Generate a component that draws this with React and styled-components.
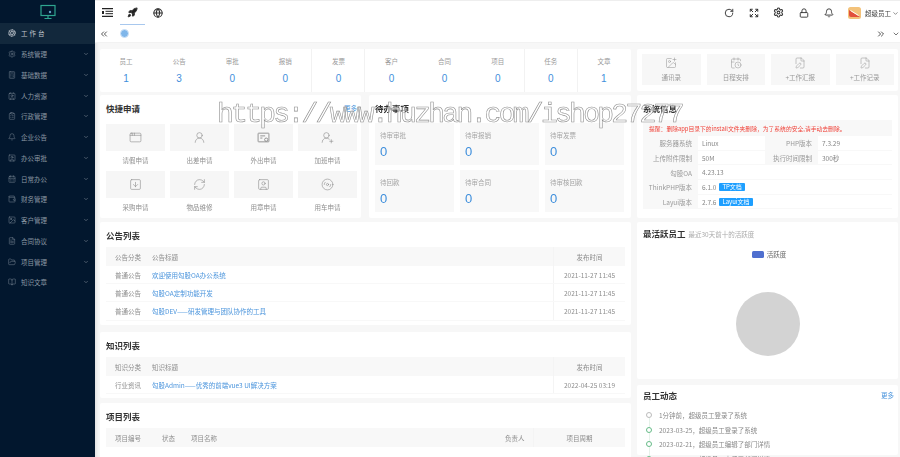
import React from "react";
import styled, { createGlobalStyle } from "styled-components";
import {
  Aperture, Settings, Calculator, Contact, ClipboardList, Bell, UserSquare, CalendarDays, Wallet, Image,
  FileText, FolderOpen, BookOpen, ChevronDown, ChevronsLeft, ChevronsRight, Rocket, Globe,
  RotateCw, Expand, Lock, AppWindow, UserRound, UserRoundPlus, SquareArrowDown, RefreshCw, SquareUser, Disc3,
  ImagePlus, CalendarClock, FileEdit, FilePen,
} from "lucide-react";

const GlobalStyle = createGlobalStyle`
  html, body { margin: 0; padding: 0; height: 100%; overflow: hidden; }
  body { font-family: "Noto Sans CJK SC", "Liberation Sans", sans-serif; background: #f7f7f7; }
  * { box-sizing: border-box; }
`;

const Shell = styled.div`
  position: relative;
  display: flex;
  width: 900px;
  height: 457px;
  overflow: hidden;
  filter: blur(0.4px);
`;

const Sidebar = styled.aside`
  width: 95px;
  flex: none;
  background: #02172e;
  color: #a7b0ba;
`;

const Logo = styled.div`
  height: 23px;
  display: flex;
  align-items: center;
  justify-content: center;
  padding-top: 1px;
`;

const MenuItem = styled.div`
  height: 20.75px;
  display: flex;
  align-items: center;
  padding-left: 8px;
  font-size: 6.5px;
  color: ${(p) => (p.$active ? "#c0c6cd" : "#8c97a3")};
  background: ${(p) => (p.$active ? "#12283c" : "transparent")};
  letter-spacing: ${(p) => (p.$active ? "2px" : "0")};
  span { margin-left: 5px; flex: 1; }
`;

const Main = styled.main`
  flex: 1;
  min-width: 0;
  display: flex;
  flex-direction: column;
  box-shadow: inset 4px 0 4px -3px rgba(0, 0, 0, 0.12);
`;

const TopBar = styled.header`
  height: 25px;
  flex: none;
  display: flex;
  align-items: stretch;
  background: #fff;
  border-top: 1px solid #eee;
`;

const NavIcon = styled.div`
  width: ${(p) => p.$w || 25}px;
  display: flex;
  align-items: center;
  justify-content: center;
  color: #333;
  border-bottom: 1px solid ${(p) => (p.$active ? "#a8c8ee" : "transparent")};
`;

const TopRight = styled.div`
  margin-left: auto;
  display: flex;
  align-items: center;
`;

const UserName = styled.div`
  display: flex;
  align-items: center;
  gap: 1px;
  font-size: 6.5px;
  color: #444;
  margin-left: 4px;
  padding-right: 1px;
`;

const Tabs = styled.div`
  height: 18px;
  flex: none;
  display: flex;
  align-items: center;
  background: #fff;
  color: #333;
  padding: 0 0 0 4px;
  border-bottom: 1px solid #f2f2f2;
`;

const TabMark = styled.div`
  width: 9px;
  height: 9px;
  margin-left: 11px;
  border-radius: 50%;
  background: #7fb6ea;
  border: 1.5px solid #cfe3f7;
`;

const TabEnd = styled.div`
  margin-left: auto;
  display: flex;
  align-items: center;
  gap: 6px;
`;

const Content = styled.div`
  flex: 1;
  display: flex;
  gap: 6px;
  padding: 6px 2px 0 5px;
  overflow: hidden;
`;

const Column = styled.div`
  width: ${(p) => p.$w}px;
  flex: none;
  display: flex;
  flex-direction: column;
`;

const Row = styled.div`
  display: flex;
  gap: 8px;
  margin-bottom: 4px;
`;

const Card = styled.section`
  width: ${(p) => (p.$w ? `${p.$w}px` : "auto")};
  height: ${(p) => p.$h}px;
  flex: none;
  margin-bottom: ${(p) => p.$mb || 0}px;
  padding: ${(p) => p.$pad || "0 6px"};
  background: #fff;
  border-radius: 2px;
`;

const StatsCard = styled(Card)`
  display: flex;
  padding: 0;
`;

const Stat = styled.div`
  width: 53.1px;
  display: flex;
  flex-direction: column;
  align-items: center;
  padding-top: 8px;
  border-right: 1px solid ${(p) => (p.$line ? "#f2f2f2" : "transparent")};
`;

const StatLabel = styled.div`
  font-size: 6.5px;
  line-height: 9px;
  color: #9a9a9a;
`;

const StatValue = styled.div`
  font-family: "Liberation Sans", sans-serif;
  font-size: 10px;
  line-height: 12px;
  margin-top: 7px;
  color: #3f8fdc;
`;

const ActionGrid = styled.div`
  display: flex;
  gap: 6px;
  padding: 5px 4px 0 5px;
`;

const Action = styled.div`
  width: 59px;
  height: 31px;
  background: #f7f7f7;
  display: flex;
  flex-direction: column;
  align-items: center;
  gap: 4px;
  padding-top: 3px;
  color: #999;
  font-size: 6.5px;
  line-height: 9px;
`;

const TitleRow = styled.div`
  height: 25px;
  display: flex;
  align-items: center;
  padding-bottom: ${(p) => p.$pb || 0}px;
  justify-content: space-between;
`;

const Title = styled.h3`
  margin: 0;
  font-size: 8.5px;
  font-weight: 700;
  color: #333;
  small {
    font-size: 6.5px;
    font-weight: 400;
    color: #aaa;
    margin-left: 3px;
  }
`;

const More = styled.a`
  font-size: 6.5px;
  color: #4a94dc;
  margin-right: -2px;
`;

const QuickGrid = styled.div`
  display: grid;
  grid-template-columns: repeat(4, 59px);
  gap: 0 5px;
  margin-top: 4px;
`;

const Quick = styled.div`
  display: flex;
  flex-direction: column;
  align-items: center;
  height: 47px;
  font-size: 6.5px;
  color: #8f8f8f;
`;

const QuickTile = styled.div`
  width: 100%;
  height: 27px;
  background: #f6f6f6;
  display: flex;
  align-items: center;
  justify-content: center;
  color: #8a8a8a;
  margin-bottom: 4px;
`;

const TodoGrid = styled.div`
  display: grid;
  grid-template-columns: repeat(3, 79px);
  gap: 5px 6px;
  margin-top: 3px;
`;

const Todo = styled.div`
  height: 42px;
  background: #f8f8f8;
  padding: 7.5px 5px;
  font-size: 6.5px;
  line-height: 9px;
  color: #a5a5a5;
`;

const TodoValue = styled.div`
  font-family: "Liberation Sans", sans-serif;
  font-size: 13px;
  line-height: 14px;
  margin-top: 5px;
  color: #3f8fdc;
`;

const InfoBox = styled.div`
  background: #f8f8f8;
  font-size: 6.5px;
  color: #888;
`;

const Notice = styled.div`
  height: 16px;
  padding: 4px 6px 0;
  line-height: 10px;
  font-size: 5.8px;
  color: #f0433a;
  white-space: nowrap;
`;

const InfoRow = styled.div`
  display: flex;
  height: 14.7px;
  align-items: center;
`;

const InfoLabel = styled.div`
  width: ${(p) => p.$w}px;
  flex: none;
  text-align: right;
  padding-right: 6px;
  color: #999;
  white-space: nowrap;
`;

const InfoValue = styled.div`
  flex: ${(p) => (p.$w ? "none" : 1)};
  width: ${(p) => (p.$w ? `${p.$w}px` : "auto")};
  height: 100%;
  background: #fff;
  display: flex;
  align-items: center;
  gap: 3px;
  padding-left: 4px;
  color: #888;
  border-bottom: 1px solid #f8f8f8;
`;

const DocTag = styled.span`
  background: #1e9fff;
  color: #fff;
  font-size: 6px;
  line-height: 8px;
  padding: 0 3px;
  border-radius: 1px;
`;

const Table = styled.div`
  font-size: 6.5px;
  color: #8d8d8d;
`;

const HeaderRow = styled.div`
  display: flex;
  height: ${(p) => p.$h || 19}px;
  align-items: center;
  background: #f8f8f8;
`;

const BodyRow = styled.div`
  display: flex;
  height: 18.2px;
  align-items: center;
  border-bottom: 1px solid #f8f8f8;
`;

const Cell = styled.div`
  width: ${(p) => p.$w}px;
  flex: ${(p) => (p.$w ? "none" : 1)};
  padding-left: ${(p) => p.$pl ?? 9}px;
  white-space: nowrap;
  align-self: stretch;
  display: flex;
  align-items: center;
  justify-content: ${(p) => (p.$center ? "center" : "flex-start")};
  color: ${(p) => (p.$link ? "#4a94dc" : "inherit")};
  border-left: ${(p) => (p.$line ? "1px solid #f4f4f4" : "0")};
`;

const Legend = styled.div`
  display: flex;
  justify-content: center;
  align-items: center;
  gap: 3px;
  font-size: 6.5px;
  color: #666;
  margin-top: 2px;
  padding-left: 3px;
  i {
    width: 12px;
    height: 7px;
    border-radius: 1.5px;
    background: #4f6fcf;
  }
`;

const Pie = styled.div`
  width: 64px;
  height: 64px;
  border-radius: 50%;
  background: #d3d3d3;
  margin: 33px auto 0;
`;

const Timeline = styled.div`
  margin-top: -2px;
`;

const Event = styled.div`
  display: flex;
  align-items: center;
  height: 14.6px;
  font-size: 6.5px;
  color: #888;
  white-space: nowrap;
  i {
    position: relative;
    width: 6px;
    height: 6px;
    margin: 0 7px 0 3px;
    border-radius: 50%;
    border: 1px solid ${(p) => (p.$first ? "#bbb" : "#66bb88")};
  }
  i::after {
    content: "";
    position: absolute;
    left: 1.5px;
    top: 5px;
    height: 9px;
    border-left: 1px solid #e6f2ea;
  }
`;

const Watermark = styled.div`
  position: absolute;
  left: 217px;
  top: 98px;
  font-family: "Liberation Mono", monospace;
  font-size: 28px;
  line-height: 34px;
  letter-spacing: -2.72px;
  color: rgba(255, 255, 255, 0.6);
  -webkit-text-stroke: 0.6px #8f8f8f;
  white-space: nowrap;
  pointer-events: none;
`;

const NavMenuIcon = () => (
  <svg width="11" height="9" viewBox="0 0 11 9" fill="none" stroke="#222">
    <path d="M0 .7h11M0 8.300h11" strokeWidth="1.300" />
    <path d="M3.500 3.300h7.500M3.500 5.700h7.500" strokeWidth="1" />
    <path d="M0 3h2v3H0z" fill="#222" strokeWidth="0" />
  </svg>
);

const TicketIcon = ({ size, strokeWidth }) => (
  <svg width={size} height={size} viewBox="0 0 24 24" fill="none" stroke="currentColor" strokeWidth={strokeWidth * 1.5}>
    <rect x="2" y="4" width="20" height="16" rx="1" />
    <path d="M6 9h9M6 13h4" />
    <circle cx="17" cy="16" r="3" />
  </svg>
);

const menu = [
  [Settings, "系统管理"], [Calculator, "基础数据"], [Contact, "人力资源"], [ClipboardList, "行政管理"],
  [Bell, "企业公告"], [UserSquare, "办公审批"], [CalendarDays, "日常办公"], [Wallet, "财务管理"],
  [Image, "客户管理"], [FileText, "合同协议"], [FolderOpen, "项目管理"], [BookOpen, "知识文章"],
];

const stats = [
  ["员工", 1], ["公告", 3], ["审批", 0], ["报销", 0, true], ["发票", 0, true],
  ["客户", 0], ["合同", 0], ["项目", 0, true], ["任务", 0, true], ["文章", 1],
];

const actions = [[ImagePlus, "通讯录"], [CalendarClock, "日程安排"], [FileEdit, "+工作汇报"], [FilePen, "+工作记录"]];

const quick = [
  [AppWindow, "请假申请"], [UserRound, "出差申请"], [TicketIcon, "外出申请"], [UserRoundPlus, "加班申请"],
  [SquareArrowDown, "采购申请"], [RefreshCw, "物品维修"], [SquareUser, "用章申请"], [Disc3, "用车申请"],
];

const todos = ["待审审批", "待审报销", "待审发票", "待回款", "待审合同", "待审核回款"];

const notices = ["欢迎使用勾股OA办公系统", "勾股OA定制功能开发", "勾股DEV——研发管理与团队协作的工具"];

const events = [
  "1分钟前，超级员工登录了系统",
  "2023-03-25，超级员工登录了系统",
  "2023-02-21，超级员工编辑了部门详情",
  "2023-02-21，超级员工查看了部门详情",
];

const ListHeader = ({ a, b }) => (
  <HeaderRow>
    <Cell $w={46}>{a}</Cell>
    <Cell $pl={0}>{b}</Cell>
    <Cell $w={72} $pl={0} $center $line>发布时间</Cell>
  </HeaderRow>
);

const ListRow = ({ a, b, date }) => (
  <BodyRow>
    <Cell $w={46}>{a}</Cell>
    <Cell $pl={0} $link>{b}</Cell>
    <Cell $w={72} $pl={0} $center $line>{date}</Cell>
  </BodyRow>
);

export default function App() {
  return (
    <Shell>
      <GlobalStyle />
      <Sidebar>
        <Logo>
          <svg width="16" height="16" viewBox="0 0 16 16" fill="none">
            <rect x="1" y="1.500" width="14" height="10" stroke="#2fa58f" strokeWidth="1.200" />
            <path d="M8 11.500v2.500M4.500 14.500h7" stroke="#2fa58f" strokeWidth="1.200" />
            <circle cx="10" cy="8" r="1.200" fill="#5f9fc0" />
          </svg>
        </Logo>
        <MenuItem $active>
          <Aperture size={8} />
          <span>工作台</span>
        </MenuItem>
        {menu.map(([Icon, label]) => (
          <MenuItem key={label}>
            <Icon size={8} strokeWidth={1.3} />
            <span>{label}</span>
            <ChevronDown size={6} style={{ marginRight: 6 }} />
          </MenuItem>
        ))}
      </Sidebar>
      <Main>
        <TopBar>
          <NavIcon><NavMenuIcon /></NavIcon>
          <NavIcon $active><Rocket size={11} fill="#222" strokeWidth={2} /></NavIcon>
          <NavIcon><Globe size={10} strokeWidth={2.6} /></NavIcon>
          <TopRight>
            <NavIcon><RotateCw size={10} strokeWidth={2.2} /></NavIcon>
            <NavIcon><Expand size={10} strokeWidth={2.4} /></NavIcon>
            <NavIcon><Settings size={11} strokeWidth={2.2} /></NavIcon>
            <NavIcon><Lock size={10} strokeWidth={2.2} /></NavIcon>
            <NavIcon><Bell size={10} strokeWidth={2.2} /></NavIcon>
            <svg width="13" height="12" viewBox="0 0 13 12" style={{ marginLeft: 7 }}>
              <rect width="13" height="12" rx="2.500" fill="#f3c27a" />
              <path d="M1 3l11 7H3a2 2 0 0 1-2-2z" fill="#e2503c" />
              <path d="M2.500 3.500l8 5" stroke="#fff" strokeWidth="1" />
            </svg>
            <UserName>超级员工<ChevronDown size={7} /></UserName>
          </TopRight>
        </TopBar>
        <Tabs>
          <ChevronsLeft size={10} />
          <TabMark />
          <TabEnd>
            <ChevronsRight size={10} />
            <ChevronDown size={8} />
          </TabEnd>
        </Tabs>
        <Content>
          <Column $w={531}>
            <StatsCard $h={43} $mb={3}>
              {stats.map(([label, value, line]) => (
                <Stat key={label} $line={line}>
                  <StatLabel>{label}</StatLabel>
                  <StatValue>{value}</StatValue>
                </Stat>
              ))}
            </StatsCard>
            <Row>
              <Card $w={261} $h={123}>
                <TitleRow>
                  <Title>快捷申请</Title>
                  <More>更多</More>
                </TitleRow>
                <QuickGrid>
                  {quick.map(([Icon, label]) => (
                    <Quick key={label}>
                      <QuickTile><Icon size={13} strokeWidth={1.1} /></QuickTile>
                      {label}
                    </Quick>
                  ))}
                </QuickGrid>
              </Card>
              <Card $w={262} $h={123}>
                <TitleRow>
                  <Title>待办事项</Title>
                </TitleRow>
                <TodoGrid>
                  {todos.map((label) => (
                    <Todo key={label}>
                      {label}
                      <TodoValue>0</TodoValue>
                    </Todo>
                  ))}
                </TodoGrid>
              </Card>
            </Row>
            <Card $h={103} $mb={7}>
              <TitleRow><Title>公告列表</Title></TitleRow>
              <Table>
                <ListHeader a="公告分类" b="公告标题" />
                {notices.map((title) => (
                  <ListRow key={title} a="普通公告" b={title} date="2021-11-27 11:45" />
                ))}
              </Table>
            </Card>
            <Card $h={66} $mb={5}>
              <TitleRow><Title>知识列表</Title></TitleRow>
              <Table>
                <ListHeader a="知识分类" b="知识标题" />
                <ListRow a="行业资讯" b="勾股Admin——优秀的前端vue3 UI解决方案" date="2022-04-25 03:19" />
              </Table>
            </Card>
            <Card $h={60}>
              <TitleRow><Title>项目列表</Title></TitleRow>
              <Table>
                <HeaderRow>
                  <Cell $w={46}>项目编号</Cell>
                  <Cell $w={39} $pl={10}>状态</Cell>
                  <Cell $pl={0}>项目名称</Cell>
                  <Cell $w={28} $pl={0}>负责人</Cell>
                  <Cell $w={92} $pl={0} $center $line>项目周期</Cell>
                </HeaderRow>
              </Table>
            </Card>
          </Column>
          <Column $w={261}>
            <Card $h={42} $mb={4} $pad="0">
              <ActionGrid>
                {actions.map(([Icon, label]) => (
                  <Action key={label}>
                    <Icon size={12} strokeWidth={1.1} />
                    {label}
                  </Action>
                ))}
              </ActionGrid>
            </Card>
            <Card $h={123} $mb={4}>
              <TitleRow><Title>系统信息</Title></TitleRow>
              <InfoBox>
                <Notice>提醒：删除app目录下的install文件夹删除，为了系统的安全,请手动去删除。</Notice>
                <InfoRow>
                  <InfoLabel $w={55}>服务器系统</InfoLabel>
                  <InfoValue $w={67}>Linux</InfoValue>
                  <InfoLabel $w={53}>PHP版本</InfoLabel>
                  <InfoValue>7.3.29</InfoValue>
                </InfoRow>
                <InfoRow>
                  <InfoLabel $w={55}>上传附件限制</InfoLabel>
                  <InfoValue $w={67}>50M</InfoValue>
                  <InfoLabel $w={53}>执行时间限制</InfoLabel>
                  <InfoValue>300秒</InfoValue>
                </InfoRow>
                <InfoRow>
                  <InfoLabel $w={55}>勾股OA</InfoLabel>
                  <InfoValue>4.23.13</InfoValue>
                </InfoRow>
                <InfoRow>
                  <InfoLabel $w={55}>ThinkPHP版本</InfoLabel>
                  <InfoValue>6.1.0<DocTag>TP文档</DocTag></InfoValue>
                </InfoRow>
                <InfoRow>
                  <InfoLabel $w={55}>Layui版本</InfoLabel>
                  <InfoValue>2.7.6<DocTag>Layui文档</DocTag></InfoValue>
                </InfoRow>
              </InfoBox>
            </Card>
            <Card $h={157} $mb={6}>
              <TitleRow $pb={3}>
                <Title>最活跃员工<small>最近30天前十的活跃度</small></Title>
              </TitleRow>
              <Legend><i />活跃度</Legend>
              <Pie />
            </Card>
            <Card $h={70}>
              <TitleRow $pb={5}>
                <Title>员工动态</Title>
                <More>更多</More>
              </TitleRow>
              <Timeline>
                {events.map((text, i) => (
                  <Event key={text} $first={i === 0}><i />{text}</Event>
                ))}
              </Timeline>
            </Card>
          </Column>
        </Content>
      </Main>
      <Watermark>https://www.huzhan.com/ishop27277</Watermark>
    </Shell>
  );
}
